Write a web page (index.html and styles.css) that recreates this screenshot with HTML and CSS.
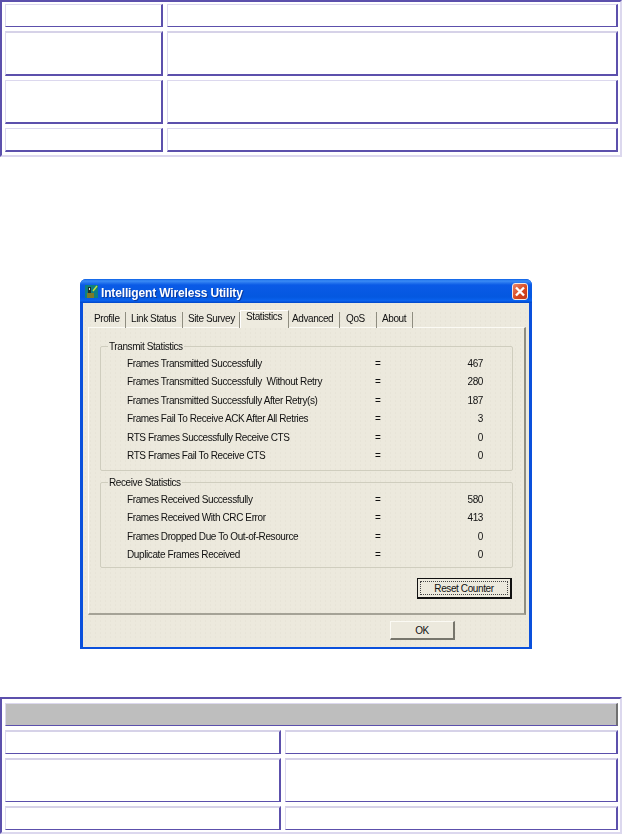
FILE: index.html
```html
<!DOCTYPE html>
<html lang="en">
<head>
    <meta charset="UTF-8">
    <title>Intelligent Wireless Utility - Statistics</title>
    <link rel="stylesheet" href="styles.css">
</head>
<body>
    <div class="data-table table-top">
        <div class="cell cell-thin"></div>
        <div class="cell cell-thin"></div>
        <div class="cell cell-thick cell-tall"></div>
        <div class="cell cell-thick cell-tall"></div>
        <div class="cell cell-soft cell-tall-b"></div>
        <div class="cell cell-soft cell-tall-b"></div>
        <div class="cell cell-soft cell-last"></div>
        <div class="cell cell-soft cell-last"></div>
    </div>

    <div class="dialog">
        <div class="title-bar">
            <svg class="app-icon" width="13" height="13" viewBox="0 0 13 13">
                <rect width="13" height="13" fill="#0f7f80"/>
                <rect x="2" y="8" width="7" height="5" fill="#7d7a28"/>
                <rect x="3" y="2" width="3" height="6" fill="#20302c"/>
                <rect x="4" y="3" width="1" height="2" fill="#e8e8e8"/>
                <path d="M8 6 L12 1" stroke="#c4e23c" stroke-width="1.4" fill="none"/>
            </svg>
            <div class="title-text">Intelligent Wireless Utility</div>
            <div class="close-button">
                <svg width="16" height="17" viewBox="0 0 16 17">
                    <path d="M4 4.5 L12 12.5 M12 4.5 L4 12.5" stroke="#fff" stroke-width="2.4" fill="none"/>
                </svg>
            </div>
        </div>

        <div class="client">
            <div class="tabs">
                <div class="tab">Profile</div>
                <div class="tab">Link Status</div>
                <div class="tab">Site Survey</div>
                <div class="tab tab-active">Statistics</div>
                <div class="tab tab-advanced">Advanced</div>
                <div class="tab tab-qos">QoS</div>
                <div class="tab">About</div>
            </div>

            <div class="sheet">
                <div class="group group-transmit">
                    <div class="group-title">Transmit Statistics</div>
                    <div class="stat-row"><div>Frames Transmitted Successfully</div><div>=</div><div class="stat-value">467</div></div>
                    <div class="stat-row"><div>Frames Transmitted Successfully&nbsp; Without Retry</div><div>=</div><div class="stat-value">280</div></div>
                    <div class="stat-row"><div>Frames Transmitted Successfully After Retry(s)</div><div>=</div><div class="stat-value">187</div></div>
                    <div class="stat-row"><div>Frames Fail To Receive ACK After All Retries</div><div>=</div><div class="stat-value">3</div></div>
                    <div class="stat-row"><div>RTS Frames Successfully Receive CTS</div><div>=</div><div class="stat-value">0</div></div>
                    <div class="stat-row"><div>RTS Frames Fail To Receive CTS</div><div>=</div><div class="stat-value">0</div></div>
                </div>

                <div class="group group-receive">
                    <div class="group-title">Receive Statistics</div>
                    <div class="stat-row"><div>Frames Received Successfully</div><div>=</div><div class="stat-value">580</div></div>
                    <div class="stat-row"><div>Frames Received With CRC Error</div><div>=</div><div class="stat-value">413</div></div>
                    <div class="stat-row"><div>Frames Dropped Due To Out-of-Resource</div><div>=</div><div class="stat-value">0</div></div>
                    <div class="stat-row"><div>Duplicate Frames Received</div><div>=</div><div class="stat-value">0</div></div>
                </div>

                <div class="sheet-actions">
                    <button class="win-button reset-button"><span>Reset Counter</span></button>
                </div>
            </div>

            <div class="dialog-actions">
                <button class="win-button ok-button">OK</button>
            </div>
        </div>
    </div>

    <div class="data-table table-bottom">
        <div class="cell cell-header"></div>
        <div class="cell cell-line cell-last"></div>
        <div class="cell cell-line cell-last"></div>
        <div class="cell cell-line cell-tall-b"></div>
        <div class="cell cell-line cell-tall-b"></div>
        <div class="cell cell-line cell-last"></div>
        <div class="cell cell-line cell-last"></div>
    </div>
</body>
</html>
```

FILE: styles.css
```css
* {
    margin: 0;
    padding: 0;
    box-sizing: border-box;
}

body {
    background-color: #fff;
    width: 622px;
    height: 834px;
    overflow: hidden;
    font-family: "Liberation Sans", Arial, sans-serif;
}

/* Empty outlined tables above and below the dialog */
.data-table {
    display: grid;
    column-gap: 4px;
    row-gap: 4px;
    border-top: 2px solid #5c50ac;
    border-left: 2px solid #5c50ac;
    border-right: 2px solid #dcd8ee;
    border-bottom: 2px solid #dcd8ee;
    padding: 2px 2px 3px 3px;
}

.table-top {
    grid-template-columns: 158px 451px;
}

.table-bottom {
    grid-template-columns: 276px 333px;
    padding: 4px 2px 2px 3px;
    margin-top: 48px;
}

.cell {
    height: 23px;
    background-color: #fff;
    border-style: solid;
    border-color: #dcd8ee #5c50ac #5c50ac #dcd8ee;
    border-width: 1px 2px 1px 1px;
}

.cell-thick {
    border-width: 2px 2px 2px 1px;
    border-top-color: #d6d2e8;
}

.cell-soft {
    border-width: 1px 2px 2px 1px;
}

.cell-tall {
    height: 45px;
}

.cell-tall-b {
    height: 44px;
}

.cell-last {
    height: 24px;
}

.cell-line {
    border-width: 2px 2px 1px 1px;
    border-top-color: #d6d2e8;
}

.cell-header {
    grid-column: 1 / 3;
    height: 23px;
    background-color: #bebebe;
    border-right-color: #707070;
}

/* XP style dialog */
.dialog {
    width: 452px;
    height: 370px;
    margin: 122px 0 0 80px;
    display: flex;
    flex-direction: column;
    background-color: #0a50dc;
    border-radius: 6px 6px 0 0;
}

.title-bar {
    height: 24px;
    display: flex;
    align-items: center;
    padding: 0 4px 0 5px;
    background: linear-gradient(#0a5fe6 0, #3c8cf5 8%, #0a5ae6 25%, #0458e0 75%, #0a62ee 90%, #0046c8 100%);
    border-radius: 6px 6px 0 0;
}

.app-icon {
    margin-right: 3px;
}

.title-text {
    flex: 1;
    padding-top: 3px;
    color: #fff;
    font-size: 12px;
    font-weight: bold;
    letter-spacing: -0.15px;
    text-shadow: 1px 1px 0 #0a3aa0;
    filter: blur(0.3px);
}

.close-button {
    width: 16px;
    height: 17px;
    display: flex;
    background: linear-gradient(135deg, #e8866c, #d8481e 55%, #c0381a);
    border: 1px solid #f4e8e0;
    border-radius: 3px;
}

.close-button svg {
    margin: -1px;
}

.client {
    flex: 1;
    margin: 0 3px 2px 3px;
    padding: 7px 3px 0 5px;
    background-color: #ece9dd;
    background-image: radial-gradient(#e6e3d6 0.6px, transparent 0.7px);
    background-size: 5px 4px;
    color: #111;
    font-size: 10px;
    letter-spacing: -0.4px;
    display: flex;
    flex-direction: column;
}

.tabs {
    display: grid;
    grid-template-columns: 36px 57px 57px 49px 51px 37px 36px;
    padding-left: 2px;
    height: 17px;
}

.tab {
    margin-top: 2px;
    padding: 1px 0 0 5px;
    white-space: nowrap;
    border-right: 1px solid #8f8d80;
    filter: blur(0.3px);
}

.tab:first-child {
    padding-left: 4px;
}

.tab-advanced {
    padding-left: 3px;
}

.tab-qos {
    padding-left: 6px;
}

.tab-active {
    margin-top: 0;
    padding: 0 0 0 5px;
    background-color: #eeebdf;
    border-top: 1px solid #fff;
    border-left: 1px solid #fff;
    border-right: 1px solid #8f8d80;
    position: relative;
    z-index: 1;
    height: 18px;
}

.sheet {
    height: 288px;
    padding: 19px 11px 0 12px;
    border-top: 1px solid #fbfaf4;
    border-left: 1px solid #fbfaf4;
    border-right: 2px solid #8f8d80;
    border-bottom: 2px solid #a5a397;
}

.group {
    position: relative;
    border: 1px solid #cfcdbe;
    border-radius: 2px;
    padding: 8px 29px 0 26px;
}

.group-transmit {
    height: 125px;
    margin: -1px 0 11px -1px;
}

.group-receive {
    height: 86px;
    margin-left: -1px;
}

.group-title {
    position: absolute;
    top: -7px;
    left: 7px;
    padding: 0 1px;
    line-height: 13px;
    background-color: #ece9dd;
    white-space: nowrap;
    filter: blur(0.3px);
}

.stat-row {
    display: grid;
    grid-template-columns: 248px 1fr 60px;
    height: 18.4px;
    line-height: 18.4px;
    white-space: nowrap;
    filter: blur(0.3px);
}

.stat-value {
    text-align: right;
}

.sheet-actions {
    display: flex;
    justify-content: flex-end;
    margin: 10px 1px 0 0;
}

.dialog-actions {
    display: flex;
    justify-content: flex-end;
    margin: 6px 71px 0 0;
}

.win-button {
    height: 19px;
    background-color: #ece9dd;
    color: #111;
    font-family: inherit;
    font-size: 10px;
    letter-spacing: inherit;
    border-style: solid;
    border-width: 1px 2px 2px 1px;
    border-color: #fbfaf4 #77766c #77766c #fbfaf4;
}

.ok-button {
    width: 65px;
}

.reset-button {
    width: 95px;
    height: 21px;
    padding: 2px;
    border: 1px solid #111;
    border-right-width: 2px;
    border-bottom-width: 2px;
}

.reset-button span {
    display: block;
    height: 100%;
    line-height: 13px;
    border: 1px dotted #444;
}
```
